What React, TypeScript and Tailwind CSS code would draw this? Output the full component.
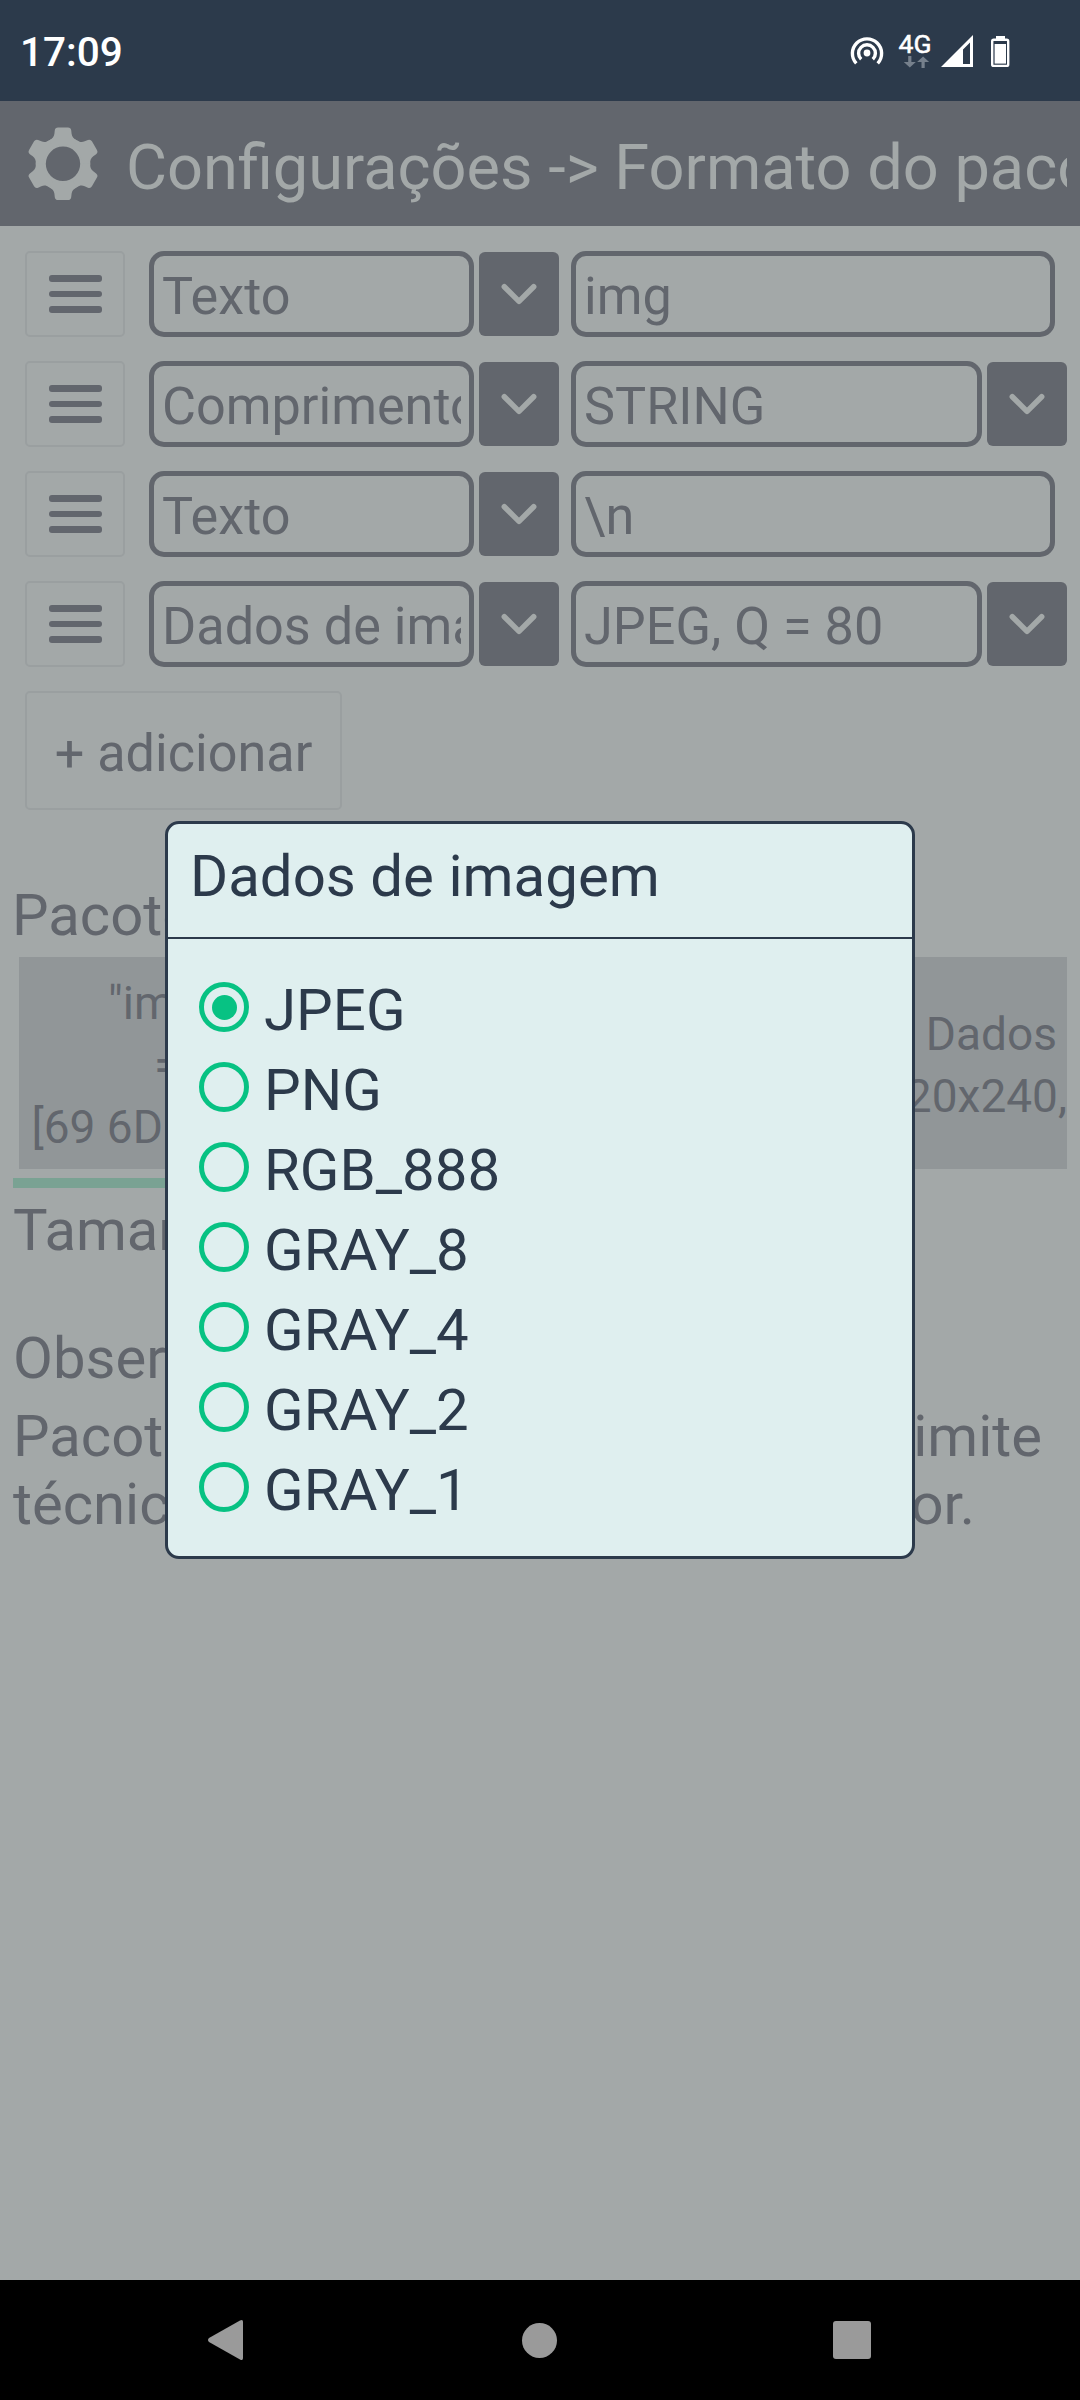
import React from "react";

type Row = { type: string; value: string; select: boolean };

const rows: Row[] = [
  { type: "Texto", value: "img", select: false },
  { type: "Comprimento", value: "STRING", select: true },
  { type: "Texto", value: "\\n", select: false },
  { type: "Dados de imagem", value: "JPEG, Q = 80", select: true },
];

const formats = ["JPEG", "PNG", "RGB_888", "GRAY_8", "GRAY_4", "GRAY_2", "GRAY_1"];

function Gear() {
  return (
    <svg className="h-[76px] w-[76px] shrink-0" viewBox="-38 -37.8 76 76" fill="#a3a8a8">
      <circle r="22.2" fill="none" stroke="#a3a8a8" strokeWidth="10" />
      {[0, 60, 120, 180, 240, 300].map((a) => (
        <path
          key={a}
          transform={`rotate(${a})`}
          d="M-10 -17.5 L-13.6 -23.6 C-10.5 -25 -9 -27 -8.6 -30 L-8.2 -33.5 Q-7.8 -36.3 -5 -36.3 H5 Q7.8 -36.3 8.2 -33.5 L8.6 -30 C9 -27 10.5 -25 13.6 -23.6 L10 -17.5 Q0 -21 -10 -17.5Z"
        />
      ))}
    </svg>
  );
}

function StatusBar() {
  return (
    <div className="flex h-[101px] items-center justify-between bg-[#2c3a4b] pr-[69px] pl-[20px] text-white">
      <span className="pt-[2px] text-[40.5px] leading-[48px] font-medium">17:09</span>
      <div className="flex h-[36px] items-start">
        <svg className="mr-[14px] h-[36px] w-[34px]" viewBox="0 0 34 36" fill="none" stroke="#fff" strokeWidth="3.4">
          <circle cx="17" cy="20" r="3.4" fill="#fff" stroke="none" />
          <path d="M11.2 26.3 A8.4 8.4 0 1 1 22.8 26.3" />
          <path d="M6.3 30.4 A14.6 14.6 0 1 1 27.7 30.4" />
        </svg>
        <div className="mr-[8px] flex w-[34px] flex-col items-center">
          <span className="pt-px text-[26.5px] leading-[20px]" style={{ WebkitTextStroke: "0.5px #fff" }}>4G</span>
          <svg className="mt-[2px] h-[12px] w-[34px]" viewBox="0 0 34 12" fill="#76808c">
            <path d="M10.2 0h3.2v6h4.4l-6 5.6-6-5.6h4.4zM23.5 12h3.2V6h4.4l-6-5.6-6 5.6h4.4z" />
          </svg>
        </div>
        <svg className="mr-[16px] h-[36px] w-[34px]" viewBox="0 0 34 36">
          <path fill="#fff" fillRule="evenodd" d="M33 2V34H1zM23 16.5V31H30V9.5z" />
        </svg>
        <svg className="h-[36px] w-[21px]" viewBox="0 0 21 36">
          <path fill="#fff" d="M6 3h9v3h-9z" />
          <rect x="2.2" y="6.7" width="16" height="26.2" rx="1.5" fill="none" stroke="#fff" strokeWidth="2.4" />
          <rect x="4.6" y="11" width="11.4" height="19.6" fill="#fff" />
        </svg>
      </div>
    </div>
  );
}

function Chevron() {
  return (
    <svg className="-mt-px h-[24px] w-[40px]" viewBox="0 0 40 24" fill="none" stroke="#a3a8a8" strokeWidth="5.5" strokeLinecap="round" strokeLinejoin="round">
      <path d="M5.3 4.7 L20 19.4 L34.7 4.7" />
    </svg>
  );
}

function FieldBox({ width, children }: { width: string; children: React.ReactNode }) {
  return (
    <div className={`${width} flex h-[86px] items-center rounded-[15px] border-[5px] border-[#62666d] px-[8px] pt-[6px]`}>
      <span className="block w-full overflow-hidden text-[52.2px] leading-[66px] whitespace-nowrap">{children}</span>
    </div>
  );
}

function FormatRow({ row }: { row: Row }) {
  return (
    <div className="flex h-[86px] items-center">
      <div className="flex h-[86px] w-[100px] items-center justify-center rounded-[5px] border-2 border-[#9a9fa0]">
        <div className="flex w-[53px] flex-col gap-[9px]">
          <div className="h-[6.5px] rounded-[3px] bg-[#62666d]" />
          <div className="h-[6.5px] rounded-[3px] bg-[#62666d]" />
          <div className="h-[6.5px] rounded-[3px] bg-[#62666d]" />
        </div>
      </div>
      <div className="ml-[24px] flex items-center">
        <FieldBox width="w-[325px]">{row.type}</FieldBox>
        <div className="ml-[5px] flex h-[84px] w-[80px] items-center justify-center rounded-[6px] bg-[#62666d]">
          <Chevron />
        </div>
      </div>
      <div className="ml-[12px] flex items-center">
        <FieldBox width={row.select ? "w-[411px]" : "w-[484px]"}>{row.value}</FieldBox>
        {row.select && (
          <div className="ml-[5px] flex h-[84px] w-[80px] items-center justify-center rounded-[6px] bg-[#62666d]">
            <Chevron />
          </div>
        )}
      </div>
    </div>
  );
}

function Dialog() {
  return (
    <div className="absolute top-[821px] left-[165px] h-[738px] w-[750px] rounded-[14px] border-[3px] border-[#2c3a4b] bg-[#dfefef] text-[58.2px] leading-[68px] text-[#2c3a4b]">
      <div className="h-[115px] border-b-2 border-[#2c3a4b] pt-[18px] pl-[22px]">Dados de imagem</div>
      <div className="flex flex-col pt-[28px] pl-[31px]">
        {formats.map((f, i) => (
          <div key={f} className="flex h-[80px] items-center">
            <div className="flex h-[50px] w-[50px] items-center justify-center rounded-full border-[5px] border-[#07c283]">
              {i === 0 && <div className="h-[25px] w-[25px] rounded-full bg-[#07c283]" />}
            </div>
            <span className="ml-[15px] pt-[5px]">{f}</span>
          </div>
        ))}
      </div>
    </div>
  );
}

function NavBar() {
  return (
    <div className="flex h-[120px] items-center justify-between bg-black pr-[209px] pl-[207px]">
      <svg className="h-[40px] w-[37px]" viewBox="0 0 37 40" fill="#9a9a9a">
        <path d="M33 0.6 Q36 -1 36 2 V38 Q36 41 33 39.4 L2 22 Q0 20 2 18Z" />
      </svg>
      <div className="ml-[2px] h-[35px] w-[35px] rounded-full bg-[#9a9a9a]" />
      <div className="h-[38px] w-[38px] rounded-[3px] bg-[#9a9a9a]" />
    </div>
  );
}

export default function App() {
  return (
    <div className="relative flex h-[2400px] w-[1080px] flex-col overflow-hidden bg-[#a3a8a8] font-['Roboto',sans-serif] text-[#62666d]">
      <StatusBar />
      <header className="flex h-[125px] items-center bg-[#62666d] pr-[13px] pl-[25px] text-[#a3a8a8]">
        <Gear />
        <div className="ml-[25px] flex-1 overflow-hidden pt-[6px] text-[63.1px] leading-[80px] whitespace-nowrap">
          Configurações -&gt; Formato do pacote
        </div>
      </header>

      <main className="flex flex-1 flex-col">
        <div className="flex flex-col gap-[24px] pt-[25px] pl-[25px]">
          {rows.map((row, i) => (
            <FormatRow key={i} row={row} />
          ))}
          <div className="flex h-[119px] w-[317px] items-center justify-center rounded-[5px] border-2 border-[#9a9fa0] pt-[6px] text-[52.2px] leading-[62px]">
            + adicionar
          </div>
        </div>

        <section className="mt-[71px] text-[58px] leading-[68px]">
          <div className="pl-[12px]">Pacote</div>
          <div className="mt-[8px] ml-[19px] flex h-[212px] w-[1048px] items-center justify-between overflow-hidden bg-[#919698] text-[46px] leading-[62px] whitespace-nowrap">
            <div className="flex w-[290px] flex-col items-center pt-[3px]">
              <span className="pr-[5px]">"img"</span>
              <span className="pl-[5px]">=</span>
              <span className="pl-[9px]">[69 6D 67 0A]</span>
            </div>
            <div className="flex w-[142px] flex-col items-end pt-[3px]">
              <span className="pr-[10px]">Dados</span>
              <span>320x240,</span>
            </div>
          </div>
          <div className="mt-[9px] ml-[13px] h-[10px] w-[500px] bg-[#7aa293]" />
          <div className="mt-[8px] pl-[13px]">Tamanho</div>
          <div className="mt-[60px] pl-[13px]">Observações</div>
          <div className="mt-[10px] pr-[38px] pl-[13px]">
            <div className="flex justify-between">
              <span>Pacotes</span>
              <span>limite</span>
            </div>
            <div className="flex justify-between pr-[67px]">
              <span>técnico</span>
              <span>receptor.</span>
            </div>
          </div>
        </section>
      </main>

      <NavBar />
      <Dialog />
    </div>
  );
}
